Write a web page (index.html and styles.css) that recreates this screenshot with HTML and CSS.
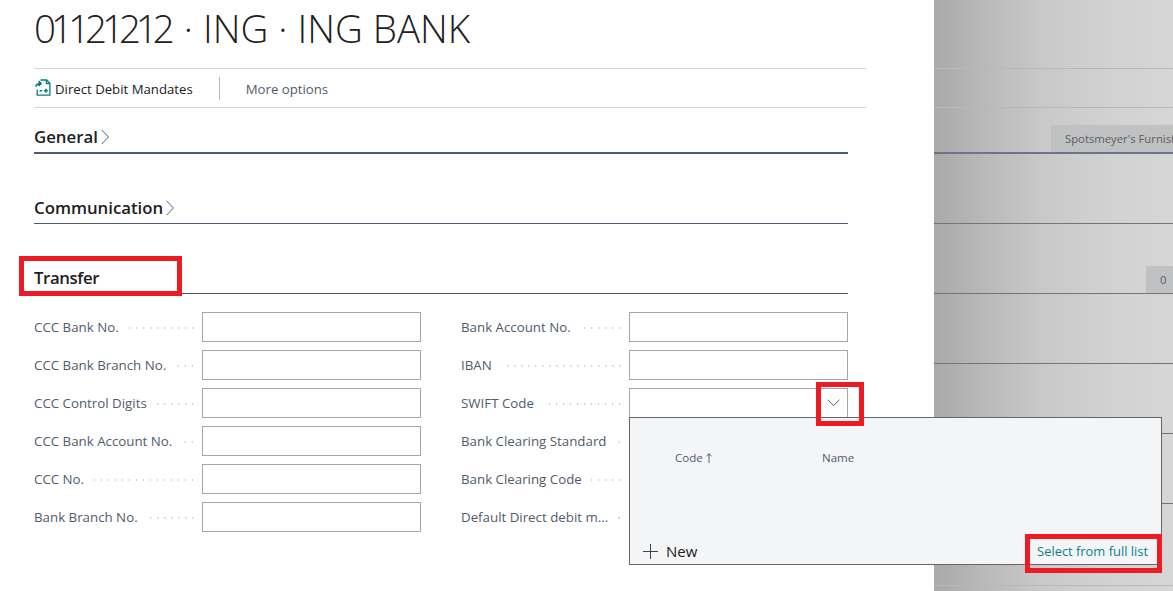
FILE: index.html
```html
<!DOCTYPE html>
<html lang="en">
<head>
  <meta charset="UTF-8">
  <meta name="viewport" content="width=device-width, initial-scale=1.0">
  <title>01121212 · ING · ING BANK</title>
  <link rel="stylesheet" href="styles.css">
</head>
<body>
  <div class="page">
    <main class="panel">
      <h1 class="title"><span class="title-code">01121212</span> · ING · ING BANK</h1>
      <nav class="toolbar">
        <a class="tool-action">
          <svg class="tool-icon" width="16" height="17" viewBox="0 0 16 17" fill="none" stroke="#0e7c80" stroke-width="1.3">
            <path d="M5.5 1h6.2l3.2 3.2v11.9H2.2v-5.6"/>
            <path d="M11.4 1v3.5h3.5"/>
            <path d="M1 7.6c.3-2.2 1.8-3 4.4-3M3.6 2.2l2.4 2.4-2.4 2.4" stroke-width="1.7"/>
            <path d="M4.6 11.7h2.6M9 11.7h3.8M10.9 9.8v3.8" stroke-width="1.6"/>
          </svg>
          Direct Debit Mandates
        </a>
        <span class="tool-sep"></span>
        <a class="tool-more">More options</a>
      </nav>

      <section class="section section-first">
        <h2 class="section-head">General
          <svg class="chev" width="8" height="16" viewBox="0 0 8 16" fill="none" stroke="#505c6d"><path d="M.6.8 7.4 8 .6 15.2"/></svg>
        </h2>
      </section>
      <section class="section">
        <h2 class="section-head">Communication
          <svg class="chev" width="8" height="16" viewBox="0 0 8 16" fill="none" stroke="#505c6d"><path d="M.6.8 7.4 8 .6 15.2"/></svg>
        </h2>
      </section>
      <section class="section">
        <h2 class="section-head section-head-tight">Transfer</h2>
      </section>

      <form class="form-grid">
        <div class="form-col">
          <div class="field"><label class="field-label"><span>CCC Bank No.</span><i class="dots"></i></label><input class="field-input" type="text"></div>
          <div class="field"><label class="field-label"><span>CCC Bank Branch No.</span><i class="dots"></i></label><input class="field-input" type="text"></div>
          <div class="field"><label class="field-label"><span>CCC Control Digits</span><i class="dots"></i></label><input class="field-input" type="text"></div>
          <div class="field"><label class="field-label"><span>CCC Bank Account No.</span><i class="dots"></i></label><input class="field-input" type="text"></div>
          <div class="field"><label class="field-label"><span>CCC No.</span><i class="dots"></i></label><input class="field-input" type="text"></div>
          <div class="field"><label class="field-label"><span>Bank Branch No.</span><i class="dots"></i></label><input class="field-input" type="text"></div>
        </div>
        <div class="form-col">
          <div class="field"><label class="field-label"><span>Bank Account No.</span><i class="dots"></i></label><input class="field-input" type="text"></div>
          <div class="field"><label class="field-label"><span>IBAN</span><i class="dots"></i></label><input class="field-input" type="text"></div>
          <div class="field"><label class="field-label"><span>SWIFT Code</span><i class="dots"></i></label>
            <div class="combo">
              <input class="field-input" type="text">
              <svg class="combo-chev" width="13" height="8" viewBox="0 0 13 8" fill="none" stroke="#505c6d"><path d="M.6.8 6.5 6.6 12.4.8"/></svg>
            </div>
          </div>
          <div class="field"><label class="field-label"><span>Bank Clearing Standard</span><i class="dots"></i></label><input class="field-input" type="text"></div>
          <div class="field"><label class="field-label"><span>Bank Clearing Code</span><i class="dots"></i></label><input class="field-input" type="text"></div>
          <div class="field"><label class="field-label"><span>Default Direct debit m...</span><i class="dots"></i></label><input class="field-input" type="text"></div>
        </div>
      </form>
    </main>

    <aside class="backdrop">
      <div class="bd-row bd-r1"></div>
      <div class="bd-row bd-r2"></div>
      <div class="bd-row bd-r3"><span class="bd-chip bd-chip-name">Spotsmeyer's Furnish</span></div>
      <div class="bd-row"></div>
      <div class="bd-row"><span class="bd-chip bd-chip-num">0</span></div>
      <div class="bd-row"></div>
      <div class="bd-row"></div>
      <div class="bd-row"></div>
      <div class="bd-row bd-r9"></div>
    </aside>

    <div class="lookup">
      <div class="lookup-head">
        <span class="lookup-code">Code
          <svg width="6" height="10" viewBox="0 0 6 10" fill="none" stroke="#505c6d"><path d="M3 10V.8M.5 3 3 .8 5.5 3"/></svg>
        </span>
        <span class="lookup-name">Name</span>
      </div>
      <div class="lookup-foot">
        <a class="lookup-new">
          <svg width="15" height="15" viewBox="0 0 15 15" fill="none" stroke="#3b4252"><path d="M7.5 0v15M0 7.5h15"/></svg>
          New
        </a>
        <a class="lookup-full">Select from full list</a>
      </div>
    </div>

    <div class="mark mark-transfer"></div>
    <div class="mark mark-chev"></div>
    <div class="mark mark-full"></div>
  </div>
</body>
</html>
```

FILE: styles.css
```css
html, body {
  margin: 0;
  padding: 0;
  height: 100%;
  overflow: hidden;
}
body {
  font-family: "Open Sans", "Noto Sans", sans-serif;
  font-size: 13.3px;
  color: #505c6d;
  background-color: #fff;
}
.page {
  position: relative;
  display: flex;
  height: 591px;
  overflow: hidden;
}

/* left card */
.panel {
  width: 934px;
  flex: none;
  box-sizing: border-box;
  padding-left: 34px;
  background-color: #fff;
}
.title {
  margin: 0;
  height: 68px;
  box-sizing: border-box;
  padding-top: 2px;
  width: 832px;
  font-size: 38.5px;
  line-height: 52px;
  font-weight: 300;
  color: #212121;
  white-space: nowrap;
}
/* the digits are much narrower in the original font */
.title-code {
  letter-spacing: -5px;
  margin-right: 4px;
}
.toolbar {
  display: flex;
  align-items: center;
  width: 832px;
  height: 37px;
  padding-top: 1px;
  border-top: 1px solid #d6d6d6;
  border-bottom: 1px solid #d6d6d6;
  font-size: 13.2px;
}
.tool-action {
  display: flex;
  align-items: center;
  gap: 4px;
  color: #212121;
}
.tool-icon {
  margin: -2px 0 0 1px;
}
.tool-sep {
  width: 1px;
  height: 23px;
  margin: 0 26px;
  background-color: #b4b8be;
}
.tool-more {
  color: #505c6d;
}

/* sections */
.section {
  width: 814px;
  height: 70px;
  box-sizing: border-box;
  display: flex;
  align-items: flex-end;
  border-bottom: 1px solid #505c6d;
  padding-bottom: 3px;
}
.section-first {
  height: 46px;
  border-bottom: 2px solid #505c6d;
}
.section-head {
  display: flex;
  align-items: center;
  gap: 3px;
  margin: 0;
  font-size: 16.8px;
  line-height: 24px;
  font-weight: 600;
  color: #212121;
}
.section-head-tight {
  letter-spacing: -0.4px;
}

/* form */
.form-grid {
  display: grid;
  grid-template-columns: 387px 387px;
  column-gap: 40px;
  padding-top: 18px;
}
.form-col {
  display: flex;
  flex-direction: column;
  gap: 8px;
}
.field {
  display: flex;
  align-items: center;
  height: 30px;
}
.field-label {
  width: 162px;
  margin-right: 6px;
  display: flex;
  align-items: center;
  flex: none;
  white-space: nowrap;
}
.dots {
  flex: 1;
  height: 2px;
  margin: 2px 0 0 9px;
  background-image: radial-gradient(circle, #c4c8cc 0.8px, transparent 1px);
  background-size: 7px 2px;
  background-position: right center;
}
.field-input {
  width: 219px;
  height: 30px;
  box-sizing: border-box;
  margin: 0;
  padding: 0 6px;
  border: 1px solid #a6a6a6;
  border-radius: 0;
  background-color: #fff;
  flex: none;
}
.combo {
  position: relative;
  width: 219px;
  height: 30px;
}
.combo-chev {
  position: absolute;
  right: 8px;
  top: 11px;
}

/* page behind the card */
.backdrop {
  flex: 1;
  background-image: linear-gradient(90deg, #a9a9a9 0, #b9b9b9 50px, #c9c9c9 110px, #d2d2d2 180px, #d6d6d6 239px);
}
.bd-row {
  height: 70px;
  box-sizing: border-box;
  display: flex;
  justify-content: flex-end;
  align-items: flex-end;
  border-bottom: 1px solid #6e7480;
  overflow: hidden;
}
.bd-r1 {
  height: 69px;
  border-bottom-color: #b8b8b8;
}
.bd-r2 {
  height: 39px;
  border-bottom-color: #b8b8b8;
}
.bd-r3 {
  height: 46px;
  border-bottom: 2px solid #6e7480;
}
.bd-r9 {
  height: 82px;
  border-bottom-color: #b8b8b8;
}
.bd-chip {
  height: 27px;
  line-height: 27px;
  font-size: 11.3px;
  color: #5d5d5d;
  background-color: #c0c1c2;
  white-space: nowrap;
  overflow: hidden;
  box-sizing: border-box;
}
.bd-chip-name {
  width: 122px;
  padding-left: 14px;
}
.bd-chip-num {
  width: 27px;
  padding-left: 14px;
}

/* lookup dropdown */
.lookup {
  position: absolute;
  left: 629px;
  top: 417px;
  width: 533px;
  height: 148px;
  box-sizing: border-box;
  border: 1px solid #666;
  background-color: #f4f5f7;
  display: flex;
  flex-direction: column;
  justify-content: space-between;
}
.lookup-head {
  display: flex;
  padding: 32px 0 0 45px;
  font-size: 11.5px;
  line-height: 16px;
}
.lookup-code {
  display: flex;
  align-items: center;
  gap: 3px;
  width: 147px;
}
.lookup-foot {
  display: flex;
  justify-content: space-between;
  align-items: center;
  padding: 0 13px 1px 13px;
  height: 24px;
}
.lookup-new {
  display: flex;
  align-items: center;
  gap: 8px;
  font-size: 15px;
  color: #212121;
}
.lookup-full {
  font-size: 12.9px;
  color: #0b7f8e;
}

/* red annotation boxes */
.mark {
  position: absolute;
  box-sizing: border-box;
  border: 5px solid #ed1c24;
}
.mark-transfer {
  left: 19px;
  top: 256px;
  width: 163px;
  height: 40px;
}
.mark-chev {
  left: 816px;
  top: 382px;
  width: 48px;
  height: 44px;
}
.mark-full {
  left: 1025px;
  top: 534px;
  width: 137px;
  height: 39px;
}
```
